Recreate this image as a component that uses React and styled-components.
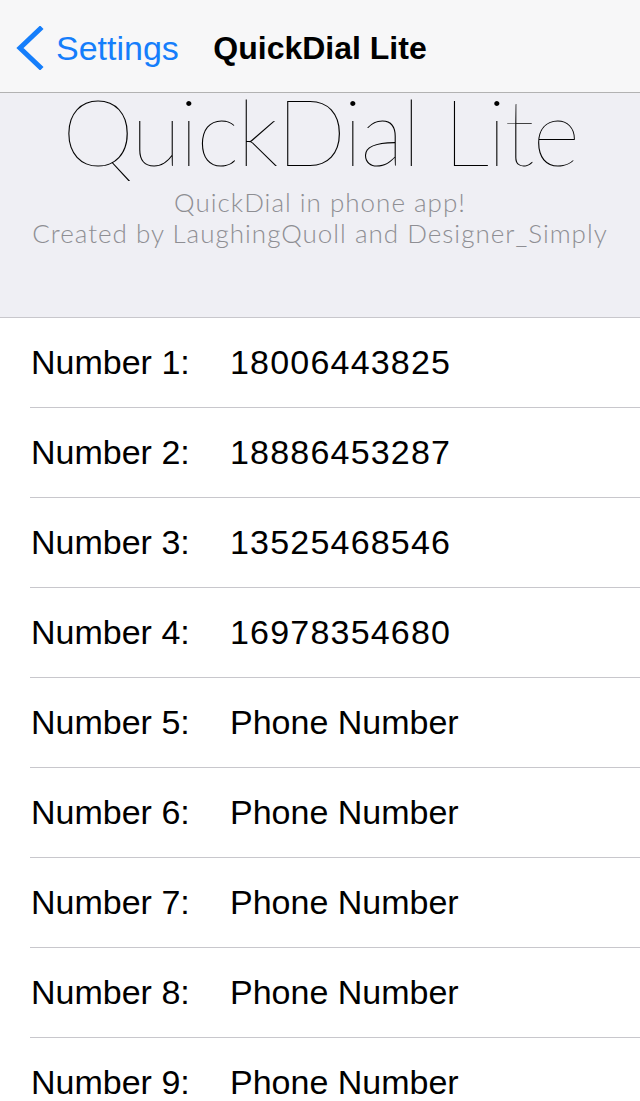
import styled, { createGlobalStyle } from 'styled-components';

const GlobalStyle = createGlobalStyle`
  html, body {
    margin: 0;
    padding: 0;
    background: #ffffff;
  }
  body {
    font-family: "Liberation Sans", Arial, sans-serif;
    -webkit-font-smoothing: antialiased;
  }
`;

const numbers = [
  '18006443825',
  '18886453287',
  '13525468546',
  '16978354680',
  'Phone Number',
  'Phone Number',
  'Phone Number',
  'Phone Number',
  'Phone Number',
];

// Nav bar
const NavBar = styled.div`
  height: 93px;
  background: #f7f7f8;
  border-bottom: 1px solid #b2b2b2;
  display: flex;
  align-items: center;
  position: relative;
  padding-top: 4px;
  box-sizing: border-box;
`;

const BackButton = styled.div`
  display: flex;
  align-items: center;
  gap: 12px;
  padding-left: 16px;
  color: #157efb;
  font-size: 34px;
  cursor: pointer;
`;

const NavTitle = styled.div`
  position: absolute;
  left: 0;
  right: 0;
  top: 4px;
  bottom: 0;
  display: flex;
  align-items: center;
  justify-content: center;
  font-size: 32px;
  font-weight: bold;
  color: #000;
  pointer-events: none;
`;

// Header
const Header = styled.div`
  background: #efeff4;
  border-bottom: 1px solid #c8c7cc;
  height: 225px;
  box-sizing: border-box;
  text-align: center;
`;

const BigTitle = styled.h1`
  margin: 0;
  font-family: Lato, "Liberation Sans", sans-serif;
  font-weight: 100;
  font-size: 92px;
  letter-spacing: -2px;
  line-height: 76px;
  color: #000;
`;

const SubText = styled.div`
  margin-top: 18px;
`;

const SubLine = styled.div`
  font-family: Lato, "Liberation Sans", sans-serif;
  font-weight: 300;
  font-size: 26px;
  letter-spacing: 1px;
  line-height: 31px;
  color: #8e8e93;
`;

// List
const List = styled.div`
  background: #fff;
`;

const Row = styled.div`
  margin-left: 30px;
  height: 89px;
  border-bottom: 1px solid #c8c7cc;
  display: grid;
  grid-template-columns: 200px 1fr;
  align-items: center;
  font-size: 34px;
  line-height: 89px;
  color: #000;
`;

const Label = styled.span`
  padding-left: 1px;
`;

const Value = styled.span`
  letter-spacing: ${(p) => (p.$numeric ? '1.2px' : '0')};
`;

const Chevron = () => (
  <svg width="28" height="44" viewBox="0 0 28 44">
    <path d="M24 3 L4 22 L24 41" fill="none" stroke="#157efb" strokeWidth="5" strokeLinecap="square" strokeLinejoin="miter" />
  </svg>
);

export default function App() {
  return (
    <>
      <GlobalStyle />
      <NavBar>
        <BackButton>
          <Chevron />
          <span>Settings</span>
        </BackButton>
        <NavTitle>QuickDial Lite</NavTitle>
      </NavBar>
      <Header>
        <BigTitle>QuickDial Lite</BigTitle>
        <SubText>
          <SubLine>QuickDial in phone app!</SubLine>
          <SubLine>Created by LaughingQuoll and Designer_Simply</SubLine>
        </SubText>
      </Header>
      <List>
        {numbers.map((n, i) => (
          <Row key={i}>
            <Label>Number {i + 1}:</Label>
            <Value $numeric={/^\d+$/.test(n)}>{n}</Value>
          </Row>
        ))}
      </List>
    </>
  );
}
